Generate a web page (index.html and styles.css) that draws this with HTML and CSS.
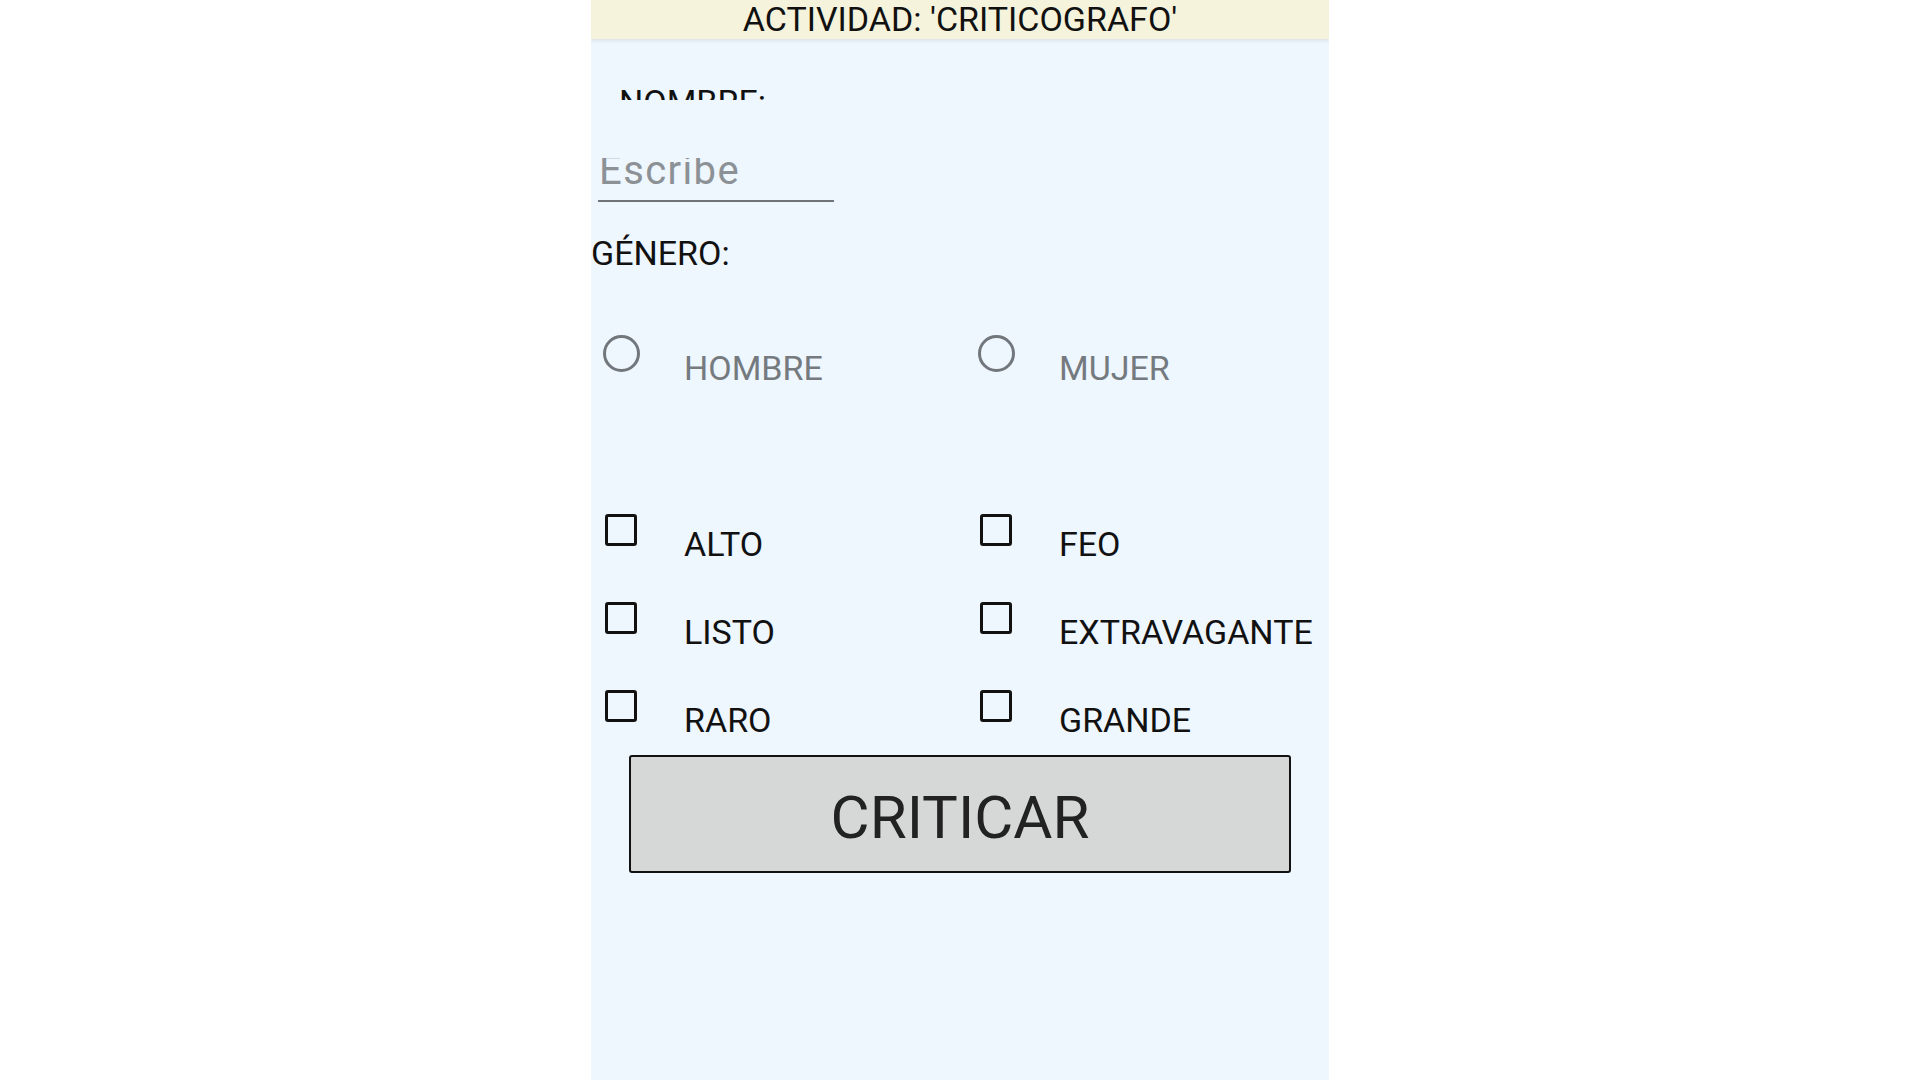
FILE: index.html
```html
<!DOCTYPE html>
<html lang="es">
<head>
  <meta charset="UTF-8">
  <title>Criticografo</title>
  <link rel="stylesheet" href="styles.css">
</head>
<body>

  <div class="screen">
    <div class="toolbar">ACTIVIDAD: 'CRITICOGRAFO'</div>

    <!-- nombre -->
    <div class="name-label"><span>NOMBRE:</span></div>
    <div class="field"><span>Escribe</span></div>

    <div class="section-label">GÉNERO:</div>

    <div class="options radios">
      <div class="option">
        <div class="mark"><span class="radio"></span></div>
        <span class="label muted">HOMBRE</span>
      </div>
      <div class="option">
        <div class="mark"><span class="radio"></span></div>
        <span class="label muted">MUJER</span>
      </div>
    </div>

    <div class="options checks">
      <div class="option">
        <div class="mark"><span class="check"></span></div>
        <span class="label">ALTO</span>
      </div>
      <div class="option">
        <div class="mark"><span class="check"></span></div>
        <span class="label">FEO</span>
      </div>
      <div class="option">
        <div class="mark"><span class="check"></span></div>
        <span class="label">LISTO</span>
      </div>
      <div class="option">
        <div class="mark"><span class="check"></span></div>
        <span class="label">EXTRAVAGANTE</span>
      </div>
      <div class="option">
        <div class="mark"><span class="check"></span></div>
        <span class="label">RARO</span>
      </div>
      <div class="option">
        <div class="mark"><span class="check"></span></div>
        <span class="label">GRANDE</span>
      </div>
    </div>

    <button class="btn">CRITICAR</button>
  </div>

</body>
</html>
```

FILE: styles.css
```css
body {
  margin: 0;
  background: #ffffff;
  font-family: Roboto, 'Noto Sans', sans-serif;
  color: #111;
}

.screen {
  width: 738px;
  height: 1080px;
  margin: 0 auto;
  background: #eef6fe;
  display: flex;
  flex-direction: column;
  overflow: hidden;
}

.toolbar {
  height: 39px;
  line-height: 39px;
  background: #f5f3db;
  text-align: center;
  font-size: 34px;
  color: #111;
  box-shadow: 0 2px 3px rgba(0,0,0,0.08);
  position: relative;
  z-index: 1;
}

.name-label {
  height: 18px;
  margin-top: 43px;
  padding-left: 28px;
  overflow: hidden;
  font-size: 34px;
  line-height: 40px;
}

.field {
  width: 236px;
  height: 42px;
  margin: 58px 0 0 7px;
  border-bottom: 2px solid #707478;
  overflow: hidden;
}

.field span {
  display: block;
  margin-top: -11px;
  padding-left: 1px;
  font-size: 40px;
  line-height: 47px;
  letter-spacing: 1.4px;
  color: #8c9196;
}

.section-label {
  margin-top: 31px;
  font-size: 34px;
  line-height: 40px;
}

.options {
  display: grid;
  grid-template-columns: 375px 1fr;
}

.radios {
  margin-top: 62px;
}

.checks {
  margin-top: 126px;
  row-gap: 38px;
}

.option {
  display: flex;
  align-items: flex-start;
}

.mark {
  width: 93px;
  flex-shrink: 0;
}

.label {
  font-size: 34px;
  line-height: 40px;
  color: #111;
}

.muted {
  color: #757a7f;
}

.radios .label {
  margin-top: 13px;
}

.checks .label {
  margin-top: 10px;
}

.radio {
  display: block;
  width: 31px;
  height: 31px;
  margin-left: 12px;
  border: 3px solid #72777c;
  border-radius: 50%;
}

.check {
  display: block;
  width: 26px;
  height: 26px;
  margin-left: 14px;
  border: 3px solid #111;
  border-radius: 3px;
}

.btn {
  width: 662px;
  height: 118px;
  margin: 15px 0 0 38px;
  background: #d6d7d7;
  border: 2px solid #111;
  border-radius: 3px;
  font-family: Roboto, 'Noto Sans', sans-serif;
  font-size: 60px;
  color: #222;
  padding: 6px 0 0 0;
}
```
